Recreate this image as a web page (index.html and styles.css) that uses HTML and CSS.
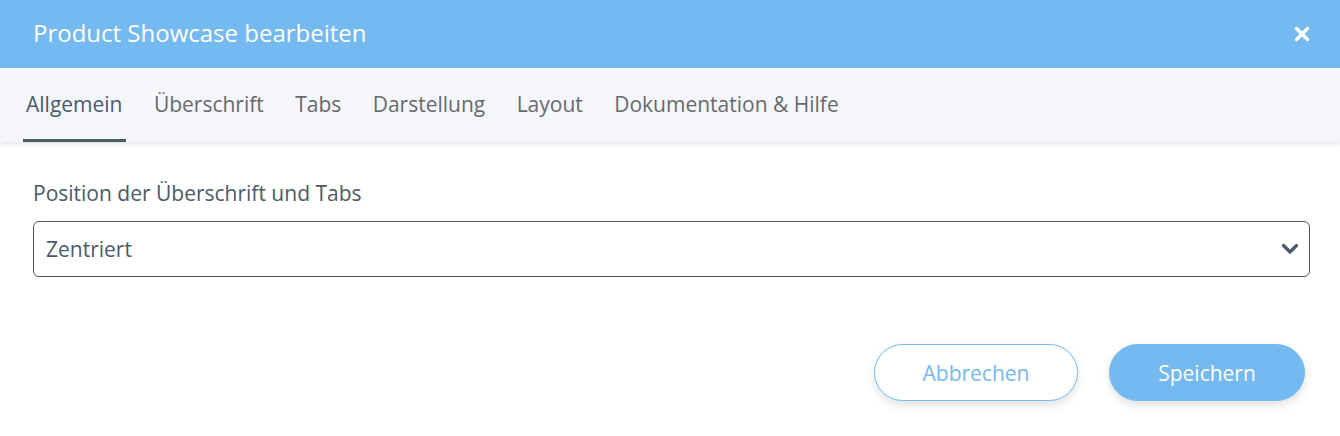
FILE: index.html
```html
<!DOCTYPE html>
<html lang="de">
<head>
<meta charset="utf-8">
<title>Product Showcase bearbeiten</title>
<link rel="stylesheet" href="styles.css">
</head>
<body>
<div class="modal">
  <header class="modal-header">
    <h1 class="modal-title">Product Showcase bearbeiten</h1>
    <button class="close-btn" aria-label="Schließen">
      <svg width="16" height="16" viewBox="0 0 16 16"><path d="M2.5 2.5 L13.5 13.5 M13.5 2.5 L2.5 13.5" stroke="#fff" stroke-width="3.4" stroke-linecap="round"/></svg>
    </button>
  </header>
  <nav class="tabs">
    <a class="tab active">Allgemein</a>
    <a class="tab">Überschrift</a>
    <a class="tab">Tabs</a>
    <a class="tab">Darstellung</a>
    <a class="tab">Layout</a>
    <a class="tab">Dokumentation &amp; Hilfe</a>
  </nav>
  <main class="content">
    <label class="field-label">Position der Überschrift und Tabs</label>
    <div class="select">
      <span class="select-value">Zentriert</span>
      <svg class="chevron" width="18" height="12" viewBox="0 0 18 12"><path d="M2.5 2.5 L9 9 L15.5 2.5" fill="none" stroke="#4a5a6b" stroke-width="3.2" stroke-linecap="round" stroke-linejoin="round"/></svg>
    </div>
  </main>
  <footer class="actions">
    <button class="btn btn-outline">Abbrechen</button>
    <button class="btn btn-primary">Speichern</button>
  </footer>
</div>
</body>
</html>
```
FILE: styles.css
```css
* { box-sizing: border-box; }
html, body { margin: 0; padding: 0; background: #fff; }
body { font-family: "Open Sans", "Liberation Sans", sans-serif; width: 1340px; height: 436px; overflow: hidden; }
.modal { display: flex; flex-direction: column; }
.modal-header {
  height: 68px; background: #74b9f0; display: flex; align-items: center;
  justify-content: space-between; padding: 0 30px 0 33px;
}
.modal-title { margin: 0 0 2px; color: #fff; font-size: 24px; font-weight: 400; line-height: 32px; }
.close-btn { background: none; border: 0; padding: 0; display: flex; cursor: pointer; }
.tabs {
  height: 74px; background: #f5f6fa; display: flex; padding: 0 23px;
  box-shadow: 0 2px 5px rgba(0,0,0,0.12); position: relative; z-index: 1;
}
.tab {
  display: flex; align-items: center; padding: 0 3px; margin-right: 25.4px;
  font-size: 21px; color: #666a6e; border-bottom: 3px solid transparent; padding-top: 1px;
}
.tab.active { color: #4a5a6b; border-bottom-color: #4a5a6b; }
.content { padding: 37px 30px 0 33px; display: flex; flex-direction: column; }
.field-label { font-size: 21px; color: #4a5a6b; line-height: 28px; margin-bottom: 14px; }
.select {
  height: 56px; border: 1px solid #4a5a6b; border-radius: 6px; display: flex;
  align-items: center; justify-content: space-between; padding: 0 10px 0 12px;
}
.select-value { font-size: 21px; color: #4a5a6b; }
.actions { display: flex; justify-content: flex-end; gap: 31px; padding: 67px 35px 0 0; }
.btn {
  height: 57px; border-radius: 29px; font-family: inherit; font-size: 21px;
  box-shadow: 0 4px 10px rgba(0,0,0,0.12); cursor: pointer;
}
.btn-outline { width: 204px; background: #fff; border: 1px solid #74b9f0; color: #74b9f0; }
.btn-primary { width: 196px; background: #74b9f0; border: 1px solid #74b9f0; color: #fff; }
```
